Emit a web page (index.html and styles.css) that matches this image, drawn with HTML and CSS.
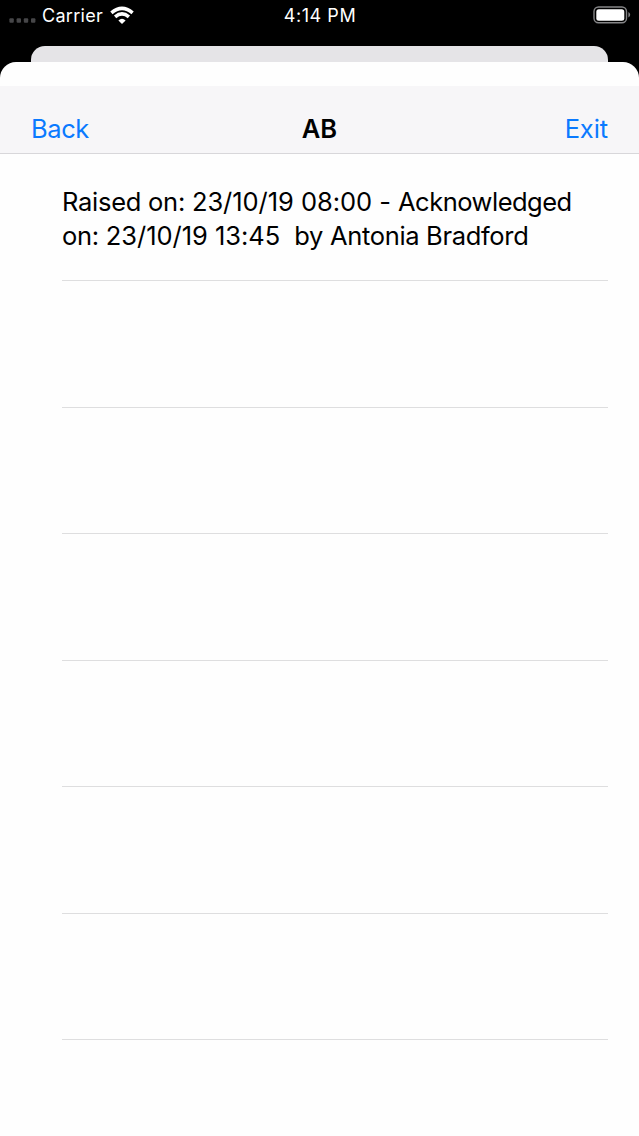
FILE: index.html
```html
<!DOCTYPE html>
<html lang="en">
<head>
    <meta charset="UTF-8">
    <meta name="viewport" content="width=device-width, initial-scale=1.0">
    <title>AB</title>
    <link rel="stylesheet" href="styles.css">
</head>
<body>
    <div class="status-bar">
        <div class="status-left">
            <svg class="signal" width="28" height="5" viewBox="0 0 28 5" fill="#464648">
                <rect x="0.4" y="0.3" width="4.4" height="4.4" rx="1"/>
                <rect x="7.6" y="0.3" width="4.4" height="4.4" rx="1"/>
                <rect x="14.8" y="0.3" width="4.4" height="4.4" rx="1"/>
                <rect x="22" y="0.3" width="4.4" height="4.4" rx="1"/>
            </svg>
            <span class="carrier">Carrier</span>
            <svg class="wifi" width="24" height="18" viewBox="0 0 24 18">
                <g fill="none" stroke="#fff" stroke-width="3.5">
                    <path d="M1.4 6.9 Q12 -2.2 22.6 6.9"/>
                    <path d="M5.1 10.8 Q12 5 18.9 10.8"/>
                </g>
                <path d="M12 18 L8.4 14.4 Q12 11.2 15.6 14.4 Z" fill="#fff"/>
            </svg>
        </div>
        <span class="time">4:14 PM</span>
        <div class="status-right">
            <svg class="battery" width="38" height="18" viewBox="0 0 38 18">
                <rect x="1" y="1" width="32.5" height="15.8" rx="4.5" fill="none" stroke="#858587" stroke-width="1.4"/>
                <rect x="3.3" y="3.3" width="28" height="11.4" rx="2.5" fill="#fff"/>
                <path d="M35.4 6 Q37.2 7 37.2 8.8 Q37.2 10.6 35.4 11.6 Z" fill="#858587"/>
            </svg>
        </div>
    </div>

    <div class="back-card"></div>

    <div class="sheet">
        <nav class="nav-bar">
            <a class="nav-link back" href="#">Back</a>
            <h1>AB</h1>
            <a class="nav-link exit" href="#">Exit</a>
        </nav>
        <ul class="list">
            <li>
                <span class="line">Raised on: <span class="date">23/10/19 08:00 - </span><span class="action">Acknowledged</span></span>
                <span class="line">on: <span class="date">23/10/19 13:45&nbsp; </span><span class="name">by Antonia Bradford</span></span>
            </li>
            <li></li>
            <li></li>
            <li></li>
            <li></li>
            <li></li>
            <li></li>
        </ul>
    </div>
</body>
</html>
```
FILE: styles.css
```css
* {
    margin: 0;
    padding: 0;
    box-sizing: border-box;
}

body {
    background: #000;
    height: 1136px;
    overflow: hidden;
    display: flex;
    flex-direction: column;
    font-family: Inter, "Liberation Sans", sans-serif;
    color: #000;
}

.status-bar {
    height: 46px;
    padding: 0 8px 0 9px;
    display: grid;
    grid-template-columns: 1fr auto 1fr;
    color: #fff;
    font-size: 18px;
    line-height: 31px;
    flex: none;
}

.status-left {
    display: flex;
    height: 31px;
}

.signal {
    margin-top: 18px;
}

.carrier {
    margin-left: 5px;
    letter-spacing: 0.3px;
}

.wifi {
    margin: 6px 0 0 7px;
}

.time {
    letter-spacing: 0.55px;
}

.status-right {
    display: flex;
    justify-content: flex-end;
}

.battery {
    margin-top: 6px;
}

.back-card {
    height: 16px;
    margin: 0 31px;
    background: #e5e4e7;
    border-radius: 14px 14px 0 0;
    flex: none;
}

.sheet {
    flex: 1;
    background: #fefefe;
    border-radius: 16px 16px 0 0;
    overflow: hidden;
}

.nav-bar {
    height: 68px;
    margin-top: 24px;
    padding: 17px 31px 0;
    background: #f7f6f8;
    border-bottom: 1px solid #d8d7da;
    display: grid;
    grid-template-columns: 1fr auto 1fr;
    align-items: center;
    font-size: 25.5px;
}

.nav-bar h1 {
    font-size: 25.5px;
    font-weight: 600;
}

.nav-link {
    color: #0a7aff;
    text-decoration: none;
    letter-spacing: -0.4px;
}

.exit {
    text-align: right;
    letter-spacing: -0.1px;
}

.list {
    list-style: none;
    padding: 0 31px 0 62px;
}

.list li {
    height: 126.5px;
    border-bottom: 1px solid #dededf;
}

.list li:first-child {
    height: 127px;
    padding-top: 31px;
}

.line {
    display: block;
    font-size: 25.5px;
    line-height: 34px;
    white-space: nowrap;
    letter-spacing: -0.26px;
}

.date {
    letter-spacing: -0.05px;
}

.action {
    letter-spacing: -0.5px;
}

.name {
    letter-spacing: -0.33px;
}
```
